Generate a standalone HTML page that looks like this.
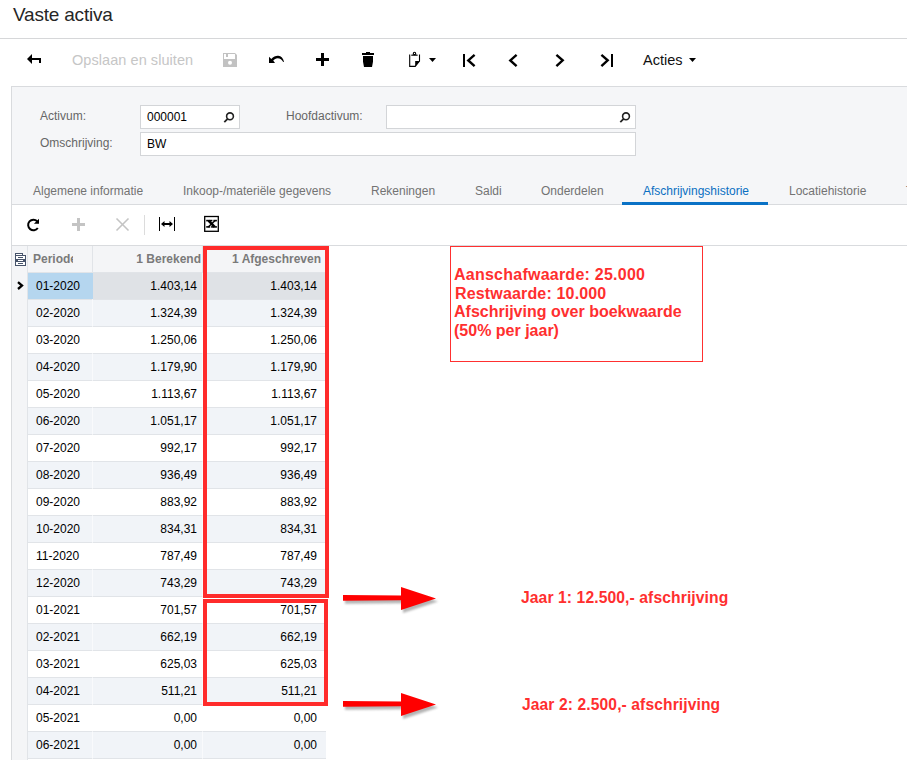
<!DOCTYPE html>
<html><head><meta charset="utf-8">
<style>
*{margin:0;padding:0;box-sizing:border-box}
html,body{width:907px;height:760px;overflow:hidden;background:#fff}
body{position:relative;font-family:"Liberation Sans",sans-serif;color:#000}
.a{position:absolute;white-space:nowrap}
svg{position:absolute;overflow:visible}
.title{left:13px;top:3px;font-size:19px;line-height:24px;letter-spacing:-0.2px;color:#262626}
.hr{left:0;top:38px;width:907px;height:1px;background:#d6d7d9}
.tb{font-size:14.5px;line-height:18px;top:51px}
.panel{left:11px;top:86px;width:896px;height:119px;background:#f5f6f8;border-top:1px solid #d9dbde;border-left:1px solid #d9dbde;border-bottom:1px solid #d9dbde}
.lbl{font-size:12px;line-height:14px;color:#666}
.inp{background:#fff;border:1px solid #d3d5d8}
.itxt{font-size:12px;line-height:14px;color:#000}
.tab{font-size:12px;line-height:14px;top:184px;color:#737373}
.gl{background:#e1e4e8}
.hd{font-size:12px;line-height:14px;font-weight:bold;color:#7a7a7a;top:252px}
.cell{font-size:12px;line-height:14px;color:#000}
.red{border:4px solid #ff2b2b}
.ann{color:#ff2f2f;font-weight:bold}
</style></head><body>
<div class="a title">Vaste activa</div>
<div class="a hr"></div>

<!-- toolbar -->
<svg width="907" height="80" style="left:0;top:0">
  <!-- back -->
  <polygon points="27,59 32,54 32,64" fill="#000"/>
  <rect x="32" y="58" width="9" height="2" fill="#000"/>
  <rect x="39" y="58" width="2" height="5" fill="#000"/>
</svg>
<div class="a tb" style="left:72px;color:#c6c6c6;letter-spacing:0.06px">Opslaan en sluiten</div>
<svg width="907" height="80" style="left:0;top:0">
  <!-- save -->
  <path d="M223,53 H235 L237,55 V67 H223 Z M224,54 V59 H235 V54 H228 V57 H226 V54 Z" fill="#c2c2c2" fill-rule="evenodd"/>
  <circle cx="230" cy="62.8" r="2" fill="#fff"/>
  <!-- undo -->
  <path d="M269,56.8 L271.3,59 C273.5,56.5 276,55.6 278.3,55.8 C281.2,56 283.3,58.5 284,61.8 L283.2,62 C282,59.8 280,58.3 277.6,58.3 C275.8,58.3 274.3,59.3 273.2,60.6 L275,63 H269 Z" fill="#000"/>
  <!-- plus -->
  <rect x="321" y="53" width="3" height="13" fill="#000"/>
  <rect x="316" y="58" width="13" height="3" fill="#000"/>
  <!-- trash -->
  <rect x="362" y="53" width="12" height="2" fill="#000"/>
  <rect x="366" y="52" width="4" height="2" fill="#000"/>
  <path d="M363,56 H373 V61.5 L372,67 H364 L363,61.5 Z" fill="#000"/>
  <!-- clipboard -->
  <path d="M409.7,54.5 V66.4 H415.2 L419.5,61 V54.5" fill="none" stroke="#000" stroke-width="1.1"/>
  <path d="M415.2,61 H419.5 L415.2,66.6 Z" fill="#000"/>
  <rect x="411.2" y="54.4" width="6.5" height="1.4" rx="0.6" fill="#000"/>
  <circle cx="414.5" cy="53.4" r="1.2" fill="none" stroke="#000" stroke-width="1.1"/>
  <polygon points="429,58 436,58 432.5,62" fill="#000"/>
  <!-- first -->
  <rect x="463" y="54" width="2" height="13" fill="#000"/>
  <polyline points="474.6,54.8 468.3,60.4 474.6,66.1" fill="none" stroke="#000" stroke-width="2.4"/>
  <!-- prev -->
  <polyline points="516.6,54.8 510.3,60.4 516.6,66.1" fill="none" stroke="#000" stroke-width="2.4"/>
  <!-- next -->
  <polyline points="556.4,54.8 562.7,60.3 556.4,66.1" fill="none" stroke="#000" stroke-width="2.4"/>
  <!-- last -->
  <polyline points="601.4,54.8 607.7,60.3 601.4,66.1" fill="none" stroke="#000" stroke-width="2.4"/>
  <rect x="611" y="54" width="2" height="13" fill="#000"/>
  <!-- acties caret -->
  <polygon points="689,58 696,58 692.5,62" fill="#000"/>
</svg>
<div class="a tb" style="left:643px;color:#111">Acties</div>

<!-- panel -->
<div class="a panel"></div>
<div class="a lbl" style="left:40px;top:109px">Activum:</div>
<div class="a lbl" style="left:40px;top:136px">Omschrijving:</div>
<div class="a lbl" style="left:286px;top:109px">Hoofdactivum:</div>
<div class="a inp" style="left:140px;top:105px;width:100px;height:24px"></div>
<div class="a inp" style="left:386px;top:105px;width:250px;height:24px"></div>
<div class="a inp" style="left:140px;top:132px;width:496px;height:24px"></div>
<div class="a itxt" style="left:147px;top:110px">000001</div>
<div class="a itxt" style="left:147px;top:137px">BW</div>
<svg width="907" height="200" style="left:0;top:0">
  <circle cx="230" cy="116.3" r="3.4" fill="none" stroke="#222" stroke-width="1.6"/>
  <line x1="227.6" y1="118.8" x2="224.3" y2="122.1" stroke="#222" stroke-width="1.8"/>
  <circle cx="626" cy="116.3" r="3.4" fill="none" stroke="#222" stroke-width="1.6"/>
  <line x1="623.6" y1="118.8" x2="620.3" y2="122.1" stroke="#222" stroke-width="1.8"/>
</svg>

<!-- tabs -->
<div class="a tab" style="left:33px">Algemene informatie</div>
<div class="a tab" style="left:183px">Inkoop-/materiële gegevens</div>
<div class="a tab" style="left:371px">Rekeningen</div>
<div class="a tab" style="left:475px">Saldi</div>
<div class="a tab" style="left:541px">Onderdelen</div>
<div class="a tab" style="left:643px;color:#0a6fc2">Afschrijvingshistorie</div>
<div class="a tab" style="left:789px">Locatiehistorie</div>
<div class="a tab" style="left:906px">T</div>
<div class="a" style="left:622px;top:202px;width:146px;height:3px;background:#0a72c6"></div>

<!-- grid area left border -->
<div class="a" style="left:11px;top:205px;width:1px;height:555px;background:#d9dbde"></div>

<!-- grid toolbar -->
<svg width="907" height="260" style="left:0;top:0">
  <!-- refresh -->
  <path d="M37.2,221.2 A5.3,5.3 0 1 0 37.8,228" fill="none" stroke="#000" stroke-width="2"/>
  <polygon points="33.9,223.8 39,223.8 39,218.8" fill="#000"/>
  <!-- plus gray -->
  <rect x="77" y="218" width="3" height="13" fill="#c4c4c4"/>
  <rect x="72" y="223" width="13" height="3" fill="#c4c4c4"/>
  <!-- x gray -->
  <line x1="116.5" y1="218.5" x2="128.5" y2="230.5" stroke="#c4c4c4" stroke-width="1.6"/>
  <line x1="128.5" y1="218.5" x2="116.5" y2="230.5" stroke="#c4c4c4" stroke-width="1.6"/>
  <!-- separator -->
  <rect x="144" y="215" width="1" height="20" fill="#dcdcdc"/>
  <!-- fit -->
  <rect x="159" y="217" width="1" height="14" fill="#000"/>
  <rect x="174" y="217" width="1" height="14" fill="#000"/>
  <path d="M161,224 L164.5,221 V223 H169.5 V221 L173,224 L169.5,227 V225 H164.5 V227 Z" fill="#000"/>
  <!-- excel -->
  <rect x="204.7" y="216.5" width="13.6" height="14.8" fill="none" stroke="#000" stroke-width="1.3"/>
  <line x1="208.6" y1="220.6" x2="214.6" y2="226.9" stroke="#000" stroke-width="2.6"/>
  <line x1="215.2" y1="220.6" x2="208.2" y2="226.9" stroke="#000" stroke-width="1.4"/>
  <rect x="206.2" y="219.8" width="6.2" height="1.6" fill="#000"/>
  <rect x="213.4" y="219.8" width="3.5" height="1.6" fill="#000"/>
  <rect x="206.2" y="226.1" width="4" height="1.6" fill="#000"/>
  <rect x="211.1" y="226.1" width="5.8" height="1.6" fill="#000"/>
</svg>

<!-- grid -->
<!--GRID-->
<div class="a" style="left:11px;top:245px;width:896px;height:1px;background:#d9dbde"></div>
<div class="a" style="left:12px;top:246px;width:314px;height:26px;background:#f4f5f7"></div>
<div class="a gl" style="left:92px;top:246px;width:1px;height:26px"></div>
<div class="a gl" style="left:202px;top:246px;width:1px;height:26px"></div>
<div class="a" style="left:12px;top:246px;width:15px;height:514px;background:#f4f5f7"></div>
<div class="a gl" style="left:27px;top:246px;width:1px;height:514px"></div>
<svg width="30" height="30" style="left:0;top:0">
<rect x="15" y="253" width="8" height="3" fill="#46536a"/>
<rect x="15" y="255" width="11" height="11" fill="#46536a"/>
<rect x="16" y="254" width="6" height="1" fill="#fff"/>
<rect x="16" y="256" width="9" height="3" fill="#fff"/>
<rect x="16" y="262" width="9" height="3" fill="#fff"/>
<rect x="18" y="257" width="5" height="1" fill="#46536a"/>
<rect x="18" y="263" width="5" height="1" fill="#46536a"/>
<rect x="18" y="260" width="5" height="1" fill="#fff"/>
</svg>
<div class="a hd" style="left:33px;width:40px;overflow:hidden">Periode</div>
<div class="a hd" style="left:93px;width:108px;text-align:right">1 Berekend</div>
<div class="a hd" style="left:203px;width:118px;text-align:right">1 Afgeschreven</div>
<div class="a gl" style="left:28px;top:272px;width:298px;height:1px"></div>
<div class="a" style="left:28px;top:273px;width:298px;height:26px;background:#dfe2e6"></div>
<div class="a" style="left:28px;top:273px;width:65px;height:26px;background:#b5d6ef"></div>
<svg width="30" height="300" style="left:0;top:0"><polyline points="18,282.2 22,285.6 18,289" fill="none" stroke="#000" stroke-width="2.3"/></svg>
<div class="a cell" style="left:36px;top:279px">01-2020</div>
<div class="a cell" style="left:93px;top:279px;width:104px;text-align:right">1.403,14</div>
<div class="a cell" style="left:203px;top:279px;width:114px;text-align:right">1.403,14</div>
<div class="a gl" style="left:28px;top:299px;width:298px;height:1px"></div>
<div class="a" style="left:28px;top:300px;width:298px;height:26px;background:#f1f4f8"></div>
<div class="a cell" style="left:36px;top:306px">02-2020</div>
<div class="a cell" style="left:93px;top:306px;width:104px;text-align:right">1.324,39</div>
<div class="a cell" style="left:203px;top:306px;width:114px;text-align:right">1.324,39</div>
<div class="a gl" style="left:28px;top:326px;width:298px;height:1px"></div>
<div class="a" style="left:28px;top:327px;width:298px;height:26px;background:#ffffff"></div>
<div class="a cell" style="left:36px;top:333px">03-2020</div>
<div class="a cell" style="left:93px;top:333px;width:104px;text-align:right">1.250,06</div>
<div class="a cell" style="left:203px;top:333px;width:114px;text-align:right">1.250,06</div>
<div class="a gl" style="left:28px;top:353px;width:298px;height:1px"></div>
<div class="a" style="left:28px;top:354px;width:298px;height:26px;background:#f1f4f8"></div>
<div class="a cell" style="left:36px;top:360px">04-2020</div>
<div class="a cell" style="left:93px;top:360px;width:104px;text-align:right">1.179,90</div>
<div class="a cell" style="left:203px;top:360px;width:114px;text-align:right">1.179,90</div>
<div class="a gl" style="left:28px;top:380px;width:298px;height:1px"></div>
<div class="a" style="left:28px;top:381px;width:298px;height:26px;background:#ffffff"></div>
<div class="a cell" style="left:36px;top:387px">05-2020</div>
<div class="a cell" style="left:93px;top:387px;width:104px;text-align:right">1.113,67</div>
<div class="a cell" style="left:203px;top:387px;width:114px;text-align:right">1.113,67</div>
<div class="a gl" style="left:28px;top:407px;width:298px;height:1px"></div>
<div class="a" style="left:28px;top:408px;width:298px;height:26px;background:#f1f4f8"></div>
<div class="a cell" style="left:36px;top:414px">06-2020</div>
<div class="a cell" style="left:93px;top:414px;width:104px;text-align:right">1.051,17</div>
<div class="a cell" style="left:203px;top:414px;width:114px;text-align:right">1.051,17</div>
<div class="a gl" style="left:28px;top:434px;width:298px;height:1px"></div>
<div class="a" style="left:28px;top:435px;width:298px;height:26px;background:#ffffff"></div>
<div class="a cell" style="left:36px;top:441px">07-2020</div>
<div class="a cell" style="left:93px;top:441px;width:104px;text-align:right">992,17</div>
<div class="a cell" style="left:203px;top:441px;width:114px;text-align:right">992,17</div>
<div class="a gl" style="left:28px;top:461px;width:298px;height:1px"></div>
<div class="a" style="left:28px;top:462px;width:298px;height:26px;background:#f1f4f8"></div>
<div class="a cell" style="left:36px;top:468px">08-2020</div>
<div class="a cell" style="left:93px;top:468px;width:104px;text-align:right">936,49</div>
<div class="a cell" style="left:203px;top:468px;width:114px;text-align:right">936,49</div>
<div class="a gl" style="left:28px;top:488px;width:298px;height:1px"></div>
<div class="a" style="left:28px;top:489px;width:298px;height:26px;background:#ffffff"></div>
<div class="a cell" style="left:36px;top:495px">09-2020</div>
<div class="a cell" style="left:93px;top:495px;width:104px;text-align:right">883,92</div>
<div class="a cell" style="left:203px;top:495px;width:114px;text-align:right">883,92</div>
<div class="a gl" style="left:28px;top:515px;width:298px;height:1px"></div>
<div class="a" style="left:28px;top:516px;width:298px;height:26px;background:#f1f4f8"></div>
<div class="a cell" style="left:36px;top:522px">10-2020</div>
<div class="a cell" style="left:93px;top:522px;width:104px;text-align:right">834,31</div>
<div class="a cell" style="left:203px;top:522px;width:114px;text-align:right">834,31</div>
<div class="a gl" style="left:28px;top:542px;width:298px;height:1px"></div>
<div class="a" style="left:28px;top:543px;width:298px;height:26px;background:#ffffff"></div>
<div class="a cell" style="left:36px;top:549px">11-2020</div>
<div class="a cell" style="left:93px;top:549px;width:104px;text-align:right">787,49</div>
<div class="a cell" style="left:203px;top:549px;width:114px;text-align:right">787,49</div>
<div class="a gl" style="left:28px;top:569px;width:298px;height:1px"></div>
<div class="a" style="left:28px;top:570px;width:298px;height:26px;background:#f1f4f8"></div>
<div class="a cell" style="left:36px;top:576px">12-2020</div>
<div class="a cell" style="left:93px;top:576px;width:104px;text-align:right">743,29</div>
<div class="a cell" style="left:203px;top:576px;width:114px;text-align:right">743,29</div>
<div class="a gl" style="left:28px;top:596px;width:298px;height:1px"></div>
<div class="a" style="left:28px;top:597px;width:298px;height:26px;background:#ffffff"></div>
<div class="a cell" style="left:36px;top:603px">01-2021</div>
<div class="a cell" style="left:93px;top:603px;width:104px;text-align:right">701,57</div>
<div class="a cell" style="left:203px;top:603px;width:114px;text-align:right">701,57</div>
<div class="a gl" style="left:28px;top:623px;width:298px;height:1px"></div>
<div class="a" style="left:28px;top:624px;width:298px;height:26px;background:#f1f4f8"></div>
<div class="a cell" style="left:36px;top:630px">02-2021</div>
<div class="a cell" style="left:93px;top:630px;width:104px;text-align:right">662,19</div>
<div class="a cell" style="left:203px;top:630px;width:114px;text-align:right">662,19</div>
<div class="a gl" style="left:28px;top:650px;width:298px;height:1px"></div>
<div class="a" style="left:28px;top:651px;width:298px;height:26px;background:#ffffff"></div>
<div class="a cell" style="left:36px;top:657px">03-2021</div>
<div class="a cell" style="left:93px;top:657px;width:104px;text-align:right">625,03</div>
<div class="a cell" style="left:203px;top:657px;width:114px;text-align:right">625,03</div>
<div class="a gl" style="left:28px;top:677px;width:298px;height:1px"></div>
<div class="a" style="left:28px;top:678px;width:298px;height:26px;background:#f1f4f8"></div>
<div class="a cell" style="left:36px;top:684px">04-2021</div>
<div class="a cell" style="left:93px;top:684px;width:104px;text-align:right">511,21</div>
<div class="a cell" style="left:203px;top:684px;width:114px;text-align:right">511,21</div>
<div class="a gl" style="left:28px;top:704px;width:298px;height:1px"></div>
<div class="a" style="left:28px;top:705px;width:298px;height:26px;background:#ffffff"></div>
<div class="a cell" style="left:36px;top:711px">05-2021</div>
<div class="a cell" style="left:93px;top:711px;width:104px;text-align:right">0,00</div>
<div class="a cell" style="left:203px;top:711px;width:114px;text-align:right">0,00</div>
<div class="a gl" style="left:28px;top:731px;width:298px;height:1px"></div>
<div class="a" style="left:28px;top:732px;width:298px;height:26px;background:#f1f4f8"></div>
<div class="a cell" style="left:36px;top:738px">06-2021</div>
<div class="a cell" style="left:93px;top:738px;width:104px;text-align:right">0,00</div>
<div class="a cell" style="left:203px;top:738px;width:114px;text-align:right">0,00</div>
<div class="a gl" style="left:28px;top:758px;width:298px;height:1px"></div>
<div class="a" style="left:92px;top:299px;width:1px;height:461px;background:rgba(255,255,255,0.55)"></div>
<div class="a" style="left:202px;top:273px;width:1px;height:487px;background:rgba(255,255,255,0.55)"></div>
<div class="a red" style="left:203px;top:246px;width:126px;height:352px"></div>
<div class="a red" style="left:203px;top:599px;width:125px;height:107px"></div>
<div class="a" style="left:450px;top:246px;width:253px;height:116px;border:1px solid #ff3030;background:#fff"></div>
<div class="a ann" style="left:454px;top:266px;font-size:16px;line-height:18px;letter-spacing:0.24px">Aanschafwaarde: 25.000</div>
<div class="a ann" style="left:455px;top:285px;font-size:16px;line-height:18px;letter-spacing:0.16px">Restwaarde: 10.000</div>
<div class="a ann" style="left:454px;top:303px;font-size:16px;line-height:18px">Afschrijving over boekwaarde</div>
<div class="a ann" style="left:454px;top:322px;font-size:16px;line-height:18px">(50% per jaar)</div>
<div class="a ann" style="left:521px;top:589px;font-size:15.7px;line-height:18px;letter-spacing:0.085px">Jaar 1: 12.500,- afschrijving</div>
<div class="a ann" style="left:522px;top:696px;font-size:15.6px;line-height:18px;letter-spacing:0.115px">Jaar 2: 2.500,- afschrijving</div>
<svg width="907" height="760" style="left:0;top:0">
<defs><filter id="sh0" x="-20%" y="-50%" width="140%" height="200%"><feGaussianBlur stdDeviation="1.3"/></filter></defs>
<path d="M343,594.9 L401,595.6 V587 L436,598.4 L401,610 V600.3 L343,600.7 Z" fill="#777" opacity="0.55" filter="url(#sh0)" transform="translate(2,3)"/>
<path d="M343,594.9 L401,595.6 V587 L436,598.4 L401,610 V600.3 L343,600.7 Z" fill="#ff0000"/>
</svg>
<svg width="907" height="760" style="left:0;top:0">
<defs><filter id="sh106" x="-20%" y="-50%" width="140%" height="200%"><feGaussianBlur stdDeviation="1.3"/></filter></defs>
<path d="M343,700.9 L401,701.6 V693 L436,704.4 L401,716 V706.3 L343,706.7 Z" fill="#777" opacity="0.55" filter="url(#sh106)" transform="translate(2,3)"/>
<path d="M343,700.9 L401,701.6 V693 L436,704.4 L401,716 V706.3 L343,706.7 Z" fill="#ff0000"/>
</svg>
<!--/GRID-->
</body></html>
